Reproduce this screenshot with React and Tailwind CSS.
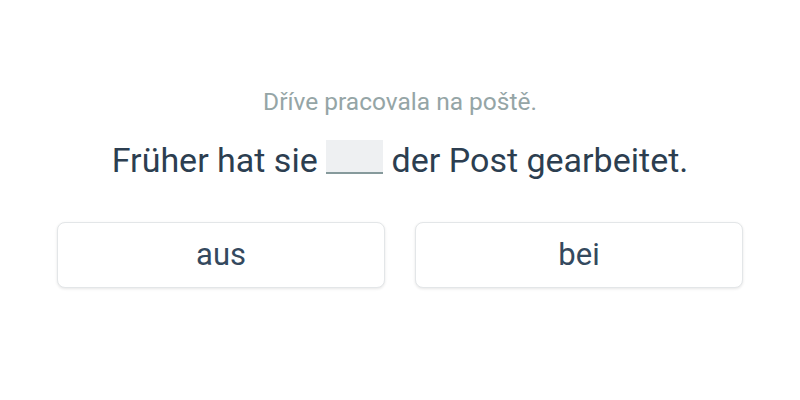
import React from 'react';

const options = ['aus', 'bei'];

function App() {
  return (
    <div className="min-h-screen w-[800px] h-[400px] bg-white font-['Roboto',sans-serif] text-[#2c3e50]">
      <div className="px-[57px] pt-[86px]">
        <p className="text-center text-[24.5px] leading-[32px] text-[#95a5a6]">Dříve pracovala na poště.</p>
        <p className="mt-[18px] text-center text-[34px] leading-[48px]">
          Früher hat sie{' '}
          <span className="inline-block w-[57px] h-[34px] align-[-2px] bg-[#eef0f2] border-b-2 border-[#869a9c]"></span>{' '}
          der Post gearbeitet.
        </p>
        <div className="mt-[38px] grid grid-cols-2 gap-[30px]">
          {options.map((opt) => (
            <button
              key={opt}
              className="h-[66px] rounded-lg border border-[#e3e6e8] bg-white shadow-[0_1px_3px_rgba(0,0,0,0.1)] text-[31px] text-[#34495e]"
            >
              {opt}
            </button>
          ))}
        </div>
      </div>
    </div>
  );
}

export default App;
